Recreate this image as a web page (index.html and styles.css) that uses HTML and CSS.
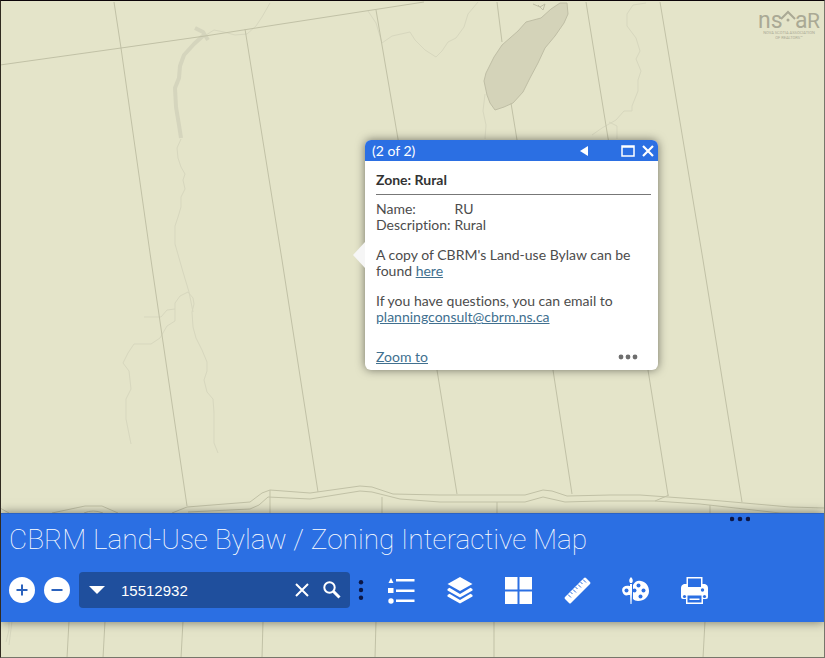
FILE: index.html
```html
<!DOCTYPE html>
<html lang="en">
<head>
    <meta charset="UTF-8">
    <meta name="viewport" content="width=device-width, initial-scale=1.0">
    <title>CBRM Land-Use Bylaw / Zoning Interactive Map</title>
    <link rel="stylesheet" href="styles.css">
</head>
<body>
    <!-- Base map -->
    <svg class="map" viewBox="0 0 825 658" preserveAspectRatio="xMidYMid slice" aria-hidden="true">
        <!-- Streams -->
        <g class="stream">
            <path d="M181 139l-4 9 1 10 3 9 4 7-2 6 2 9-4 8 0 10-3 10-3 9 0 18 4 14 4 14 6 20 4 20"/>
            <path d="M188 292l5 6 1 6-2 8 1 15 3 11 6 12 5 12 0 9-3 9 3 12 6 7 1 14 0 30 4 10"/>
            <path d="M188 292l-8 4-5 7 0 18-8 5-7 12-9 6-17 0-6 9-5 10 6 8 2 18-5 10 0 20 5 25"/>
            <path d="M144 317h17l6-7 8-1"/>
            <path d="M206 35l8-5 10 2 11 3 12-1 9-8 6-9 8-14"/>
            <path d="M368 11l8 12 6 20 10-7 18-4 5 8 10 10 11 7 6-6 6-9 8-4 8-11 4-13 10-12"/>
            <path d="M646 3l-13 2-6 9 0 12 9 12 4 13-4 8 5 12-3 9 0 11-6 15 0 5-8 0-8 9-14 8-10 7"/>
            <path d="M485 94l-2 17 3 14-1 14M609 122l8 4 0 13"/>
        </g>
        <g class="river">
            <path d="M208 40l-5-8-8-4M205 34l-11 10-10 11-4 11-1 12-4 10 1 19 3 18 2 13"/>
        </g>
        <!-- Lake -->
        <path class="lake" d="M551 9l-10 9-15 4-8 9-16 14-8 12-8 16-2 8 3 14 3 8 5 7 9-3 9-4 10-11 7-14 8-15 7-15 10-12 9-13 4-9-1-11h-7z"/>
        <path class="shore" d="M533 4l7 3 5-3M538 5l5 5 2-6"/>
        <!-- Parcel lines -->
        <g class="parcel">
            <path d="M0 65l121-17 84-12 70-11L424 2"/>
            <path d="M114 2l7 46 30 212 36 246"/>
            <path d="M245 29l37 231 36 232"/>
            <path d="M376 10l22 129 39 231 20 124"/>
            <path d="M497 2l5 40M511 103l6 37 36 230 19 124"/>
            <path d="M586 2l22 136 40 232 20 125"/>
            <path d="M660 2l43 258 39 242"/>
            <path d="M270 490v24M382 497v17M497 502v12M710 505v9"/>
            <path d="M69 621l-2 37M105 621l-2 37M183 621l-2 37M263 621l-1 37M376 621l-1 37M494 621v37M705 621l-2 37"/>
        </g>
        <path class="stream" d="M9 621v9l-3 12M12 621l-3 24"/>
        <!-- Roads -->
        <g class="parcel">
            <path d="M0 508l9 5M52 513l33-7h17l16 7M84 513q9-4 19 0"/>
            <path d="M172 513l15-6 63-5 12-9 8-3 40 3 50-7 12 1 21 7 47 1h85l18-5 9 1 15 5 43-1 30 0 28 2 42 3 80 7 35 1"/>
            <path d="M188 512l62-3 9-4 9-8 42 2 50-8 12 1 28 7 40 3h85l18-5 22 5 35-1h55l45 3 80 9 45 1"/>
            <path d="M655 501l14-6"/>
        </g>
    </svg>

    <!-- Watermark -->
    <svg class="watermark" viewBox="0 -6 64 42" role="img" aria-label="nsaar">
        <text x="1" y="20" font-size="23">ns</text>
        <path d="M24 11l7-7 7 7"/>
        <circle cx="31" cy="12" r="1.500"/>
        <text x="38" y="20" font-size="23">a</text>
        <text x="50" y="20" font-size="21">R</text>
        <text x="32" y="26" font-size="4" text-anchor="middle">NOVA SCOTIA ASSOCIATION</text>
        <text x="32" y="31" font-size="4" text-anchor="middle">OF REALTORS™</text>
    </svg>

    <!-- Zone popup -->
    <section class="popup">
        <header class="popup-header">
            <span class="popup-count">(2 of 2)</span>
            <button class="popup-btn prev" aria-label="Previous">
                <svg viewBox="0 0 14 14"><path d="M3 7l8-5v10z" fill="#fff"/></svg>
            </button>
            <button class="popup-btn" aria-label="Maximize">
                <svg viewBox="0 0 14 14"><path d="M1 2h12v10H1zM1 3h12" fill="none" stroke="#fff" stroke-width="1.5"/></svg>
            </button>
            <button class="popup-btn" aria-label="Close">
                <svg viewBox="0 0 14 14"><path d="M2 2l10 10M12 2L2 12" stroke="#fff" stroke-width="2.2"/></svg>
            </button>
        </header>
        <div class="popup-body">
            <h2>Zone: Rural</h2>
            <table>
                <tr><th scope="row">Name:</th><td>RU</td></tr>
                <tr><th scope="row">Description:</th><td>Rural</td></tr>
            </table>
            <p>A copy of CBRM's Land-use Bylaw can be found <a href="#">here</a></p>
            <p>If you have questions, you can email to <a href="mailto:planningconsult@cbrm.ns.ca">planningconsult@cbrm.ns.ca</a></p>
        </div>
        <footer class="popup-footer">
            <a href="#">Zoom to</a>
            <button class="more" aria-label="More actions">
                <svg viewBox="0 0 20 6"><circle cx="3" cy="3" r="2.4"/><circle cx="10" cy="3" r="2.4"/><circle cx="17" cy="3" r="2.4"/></svg>
            </button>
        </footer>
    </section>

    <!-- Bottom panel -->
    <main class="panel">
        <button class="panel-handle" aria-label="Panel options">
            <svg viewBox="0 0 20 6"><circle cx="2" cy="3" r="2.3"/><circle cx="10" cy="3" r="2.3"/><circle cx="18" cy="3" r="2.3"/></svg>
        </button>
        <h1>CBRM Land-Use Bylaw / Zoning Interactive Map</h1>
        <div class="toolbar">
            <div class="zoom">
                <button aria-label="Zoom in"><svg viewBox="0 0 26 26"><path d="M7.500 13h11M13 7.500v11"/></svg></button>
                <button aria-label="Zoom out"><svg viewBox="0 0 26 26"><path d="M7.500 13h11"/></svg></button>
            </div>
            <div class="search">
                <button class="source" aria-label="Search source"><svg viewBox="0 0 16 10"><path d="M0 1h16L8 9z" fill="#fff"/></svg></button>
                <input type="text" value="15512932" aria-label="Search">
                <button class="clear" aria-label="Clear"><svg viewBox="0 0 14 14"><path d="M1 1l12 12M13 1L1 13" stroke="#fff" stroke-width="2"/></svg></button>
                <button class="find" aria-label="Find"><svg viewBox="0 0 18 18"><circle cx="6.500" cy="6.500" r="5.200" fill="none" stroke="#fff" stroke-width="2"/><path d="M10.500 10.500l6 6" stroke="#fff" stroke-width="3"/></svg></button>
            </div>
            <svg class="divider" viewBox="0 0 6 20" aria-hidden="true"><circle cx="3" cy="2.300" r="2.200"/><circle cx="3" cy="10" r="2.200"/><circle cx="3" cy="17.700" r="2.200"/></svg>
            <nav class="tools">
                <button aria-label="Legend">
                    <svg viewBox="0 0 27 27"><path d="M3 1l2.500 5h-5zM0 11h5.500v5H0z"/><circle cx="3" cy="24" r="2.700"/><path d="M8 2h18.500v2.500H8zM8 12.500h18.500V15H8zM8 22.500h18.500V25H8z"/></svg>
                </button>
                <button aria-label="Layers">
                    <svg viewBox="0 0 27 27"><path d="M13 0l12.500 7L13 14 .5 7z"/><path d="M.5 12l2-1.200L13 17l10.500-6.200 2 1.200v1.500L13 20.500.5 13.500zM.5 18l2-1.200L13 23l10.500-6.200 2 1.200v1.500L13 26.500.5 19.500z"/></svg>
                </button>
                <button aria-label="Basemap gallery">
                    <svg viewBox="0 0 27 27"><path d="M0 0h12.500v12.500H0zM14.500 0H27v12.500H14.500zM0 14.500h12.500V27H0zM14.500 14.500H27V27H14.500z"/></svg>
                </button>
                <button aria-label="Measure">
                    <svg viewBox="0 0 27 27"><path d="M20 1q1-1 2 0l4 4q1 1 0 2L7 26q-1 1-2 0l-4-4q-1-1 0-2z"/><path class="cut" d="M4 17.500l3 3M6.500 15l2 2M9 12.500l3 3M11.500 10l2 2M14 7.500l3 3M16.500 5l2 2M19 2.500l3 3"/></svg>
                </button>
                <button aria-label="Draw">
                    <svg viewBox="0 0 27 27">
                        <path d="M7.500 9C2 8-1 11 .5 15c1 3 3 4 6 3l1.500 0V9zM11 8c2-4 5-5 8-4 5 1 8 5 8 10 0 6-5 10-11 10-2 0-4-1-5-2z"/>
                        <g class="hole"><circle cx="4.500" cy="13.500" r="2"/><circle cx="16.500" cy="8.500" r="2"/><circle cx="21.500" cy="13.500" r="2"/><circle cx="18.500" cy="19.500" r="2"/><circle cx="12.500" cy="13.500" r="2"/></g>
                        <path d="M9 0q3 3 1 6H8q-2-3 1-6zM8 7h2v8L9.500 27h-1L8 15z"/>
                    </svg>
                </button>
                <button aria-label="Print">
                    <svg viewBox="0 0 27 27"><path d="M5.500 0h16v7H24q3 1 3 4v9q0 2-2 2h-3v5H5v-5H2q-2 0-2-2v-9q0-3 3-4h2.500z"/><g class="hole"><path d="M7 1.500h13v8.500H7z"/><circle cx="21.500" cy="13" r="1.700"/><circle cx="3.500" cy="19.500" r="1.600"/><circle cx="23.500" cy="19.500" r="1.600"/><path d="M6.500 18.500h14v7h-14z"/></g><path d="M8.500 21.500h10V23h-10z"/></svg>
                </button>
            </nav>
        </div>
    </main>
</body>
</html>
```
FILE: styles.css
```css
* {
    box-sizing: border-box;
}
body {
    position: relative;
    display: flex;
    flex-direction: column;
    justify-content: flex-end;
    min-height: 100vh;
    margin: 0;
    padding-bottom: 35px;
    overflow: hidden;
    border: 1px solid #77756a;
    border-top-color: #0c0408;
    border-left-color: #302a20;
    background-color: #e4e4c9;
    font-family: Lato, "Liberation Sans", sans-serif;
    font-variant-ligatures: none;
}
button {
    display: flex;
    align-items: center;
    justify-content: center;
    padding: 0;
    border: none;
    background: none;
    cursor: pointer;
}
.map {
    position: absolute;
    top: -1px;
    left: -1px;
    width: 100vw;
    height: 100vh;
}
.map path {
    fill: none;
}
.map .parcel {
    stroke: #c1c1a6;
    stroke-width: 1;
}
.map .stream {
    stroke: #d7d7be;
    stroke-width: 1;
}
.map .river {
    stroke: #d5d5bd;
    stroke-width: 4;
    stroke-linejoin: round;
}
.map .lake {
    fill: #d4d3b9;
    stroke: #bfbea5;
    stroke-linejoin: round;
}
.map .shore {
    stroke: #bfbea5;
}
.watermark {
    position: absolute;
    top: 1px;
    right: 3px;
    width: 64px;
    height: 42px;
    fill: #aaa995;
    font-family: Roboto, sans-serif;
    font-weight: 400;
}
.watermark path {
    fill: none;
    stroke: #aaa995;
    stroke-width: 2;
}

/* Popup */
.popup {
    position: absolute;
    top: 139px;
    left: 364px;
    width: 293px;
    border-radius: 6px;
    background-color: #fff;
    box-shadow: 0 0 10px rgba(0, 0, 0, 0.5);
    color: #4c4c4c;
    font-size: 14px;
    line-height: 16px;
}
.popup::before {
    content: "";
    position: absolute;
    top: 102px;
    left: -12px;
    width: 12px;
    height: 26px;
    background-color: #f6f6f6;
    clip-path: polygon(100% 0, 0 50%, 100% 100%);
}
.popup-header {
    display: flex;
    align-items: center;
    gap: 6px;
    height: 21px;
    padding: 0 3px 0 7px;
    border-radius: 6px 6px 0 0;
    background-color: #2b6fe3;
    color: #fff;
}
.popup-count {
    flex: 1;
}
.popup-btn svg {
    width: 14px;
    height: 14px;
}
.popup-btn.prev {
    margin-right: 24px;
}
.popup-body {
    padding: 10px 7px 0 11px;
}
.popup h2 {
    margin: 0 0 6px;
    padding-bottom: 5px;
    border-bottom: 1px solid #777;
    color: #333;
    font-size: 14px;
    line-height: 18px;
}
.popup table {
    border-spacing: 0;
}
.popup th,
.popup td {
    padding: 0 4px 0 0;
    font-weight: normal;
    text-align: left;
}
.popup p {
    margin: 14px 14px 0 0;
}
.popup a {
    color: #41708f;
}
.popup-footer {
    display: flex;
    align-items: center;
    justify-content: space-between;
    padding: 24px 20px 5px 11px;
}
.more svg {
    width: 20px;
    height: 6px;
    fill: #6e6e6e;
}

/* Bottom panel */
.panel {
    position: relative;
    padding: 8px 8px 14px;
    border-top: 1px solid #2a62c4;
    background-color: #2b6fe3;
    box-shadow: 0 0 10px rgba(0, 0, 0, 0.5);
}
.panel-handle {
    position: absolute;
    top: 2px;
    right: 74px;
}
.panel-handle svg {
    width: 20px;
    height: 6px;
    fill: #0b1747;
}
.panel h1 {
    margin: 0 0 14px;
    color: #fff;
    font-family: Roboto, "Liberation Sans", sans-serif;
    font-size: 28px;
    font-weight: 100;
    line-height: 36px;
}
.toolbar {
    display: flex;
    align-items: center;
}
.zoom {
    display: flex;
    gap: 9px;
}
.zoom button {
    width: 26px;
    height: 26px;
    border-radius: 50%;
    background-color: #fff;
}
.zoom svg {
    width: 26px;
    height: 26px;
    stroke: #2b62bd;
    stroke-width: 2;
}
.search {
    display: flex;
    align-items: center;
    width: 271px;
    height: 36px;
    margin-left: 9px;
    padding: 0 9px 0 10px;
    border-radius: 4px;
    background-color: #1f4f9d;
}
.search input {
    flex: 1;
    min-width: 0;
    padding: 0 0 0 16px;
    border: none;
    outline: none;
    background: none;
    color: #fff;
    font-family: "Liberation Sans", Arial, sans-serif;
    font-size: 15px;
}
.source svg {
    width: 16px;
    height: 10px;
}
.clear svg {
    width: 14px;
    height: 14px;
}
.find {
    margin-left: 14px;
}
.find svg {
    width: 18px;
    height: 18px;
}
.divider {
    width: 6px;
    height: 20px;
    margin-left: 8px;
    fill: #0b1747;
}
.tools {
    display: flex;
    justify-content: space-between;
    width: 320px;
    margin-left: 24px;
}
.tools svg {
    width: 27px;
    height: 27px;
    fill: #fff;
}
.tools .cut {
    stroke: #2b6fe3;
    stroke-width: 1;
}
.tools .hole {
    fill: #2b6fe3;
}
```
